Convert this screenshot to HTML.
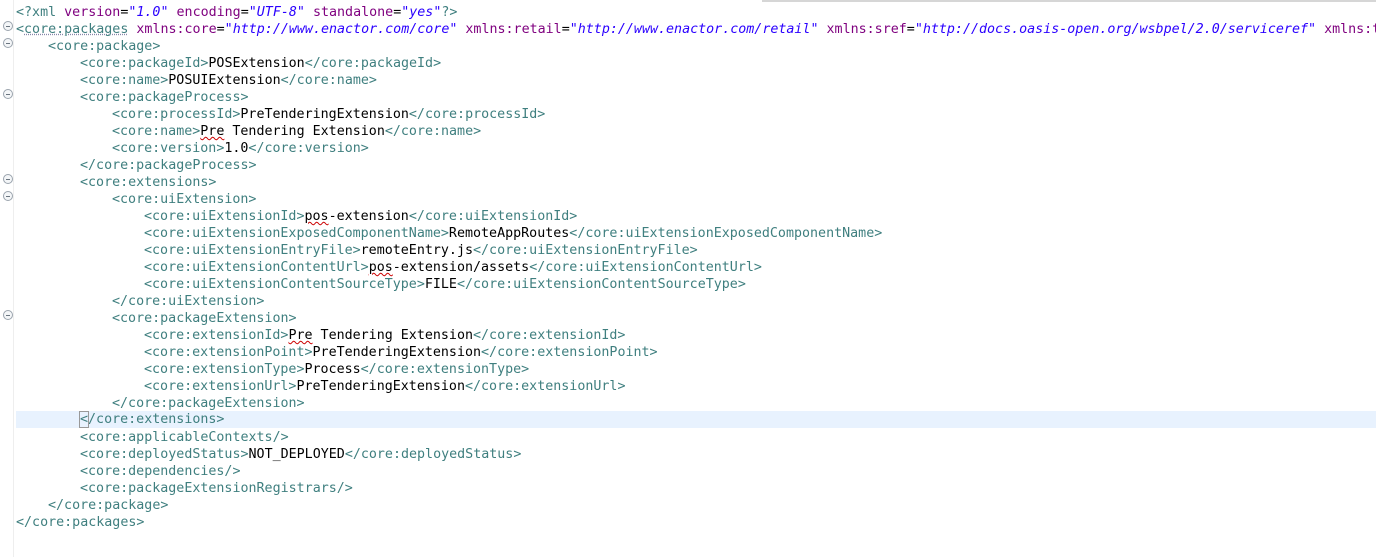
<!DOCTYPE html>
<html><head><meta charset="utf-8"><style>
body{margin:0;width:1376px;height:557px;background:#fff;overflow:hidden;position:relative;font-family:"DejaVu Sans Mono","Liberation Mono",monospace;font-size:13.33px}
.topbar{position:absolute;left:762px;top:0;right:0;height:2px;background:#d6d6d6}
.gut{position:absolute;left:13px;top:0;width:1px;height:557px;background:#eeeeee}
.hl{position:absolute;left:16px;right:0;top:411px;height:17px;background:#e8f2fe}
.l{position:absolute;left:16px;height:17px;line-height:17px;white-space:pre;color:#000;margin-top:1px}
.t{color:#3f7f7f}.a{color:#7f007f}.v{color:#2a00ff;font-style:italic}
.f{position:absolute;left:3px;width:8px;height:8px;border:1px solid #9aa3ad;border-radius:50%;background:#f4f6f8;margin-top:1px}
.f:after{content:"";position:absolute;left:2px;top:4px;width:4px;height:1px;background:#6a7580}
.sq{text-decoration:underline wavy #c00;text-decoration-thickness:1px}
.cur{outline:1px solid #999}
</style></head><body>
<div class="topbar"></div><div class="gut"></div><div class="hl"></div>
<div class="f" style="top:20px"></div>
<div class="f" style="top:37px"></div>
<div class="f" style="top:88px"></div>
<div class="f" style="top:173px"></div>
<div class="f" style="top:190px"></div>
<div class="f" style="top:309px"></div>
<div class="l" style="top:3px"><span class="t">&lt;?xml </span><span class="a">version</span>=<span class="v">"1.0"</span> <span class="a">encoding</span>=<span class="v">"UTF-8"</span> <span class="a">standalone</span>=<span class="v">"yes"</span><span class="t">?&gt;</span></div>
<div class="l" style="top:20px"><span class="t">&lt;<span style="text-decoration:underline dotted #88a">core:packages</span> </span><span class="a">xmlns:core</span>=<span class="v">"http://www.enactor.com/core"</span> <span class="a">xmlns:retail</span>=<span class="v">"http://www.enactor.com/retail"</span> <span class="a">xmlns:sref</span>=<span class="v">"http://docs.oasis-open.org/wsbpel/2.0/serviceref"</span> <span class="a">xmlns:t</span></div>
<div class="l t" style="top:37px;left:48px">&lt;core:package&gt;</div>
<div class="l" style="top:54px;left:80px"><span class="t">&lt;core:packageId&gt;</span>POSExtension<span class="t">&lt;/core:packageId&gt;</span></div>
<div class="l" style="top:71px;left:80px"><span class="t">&lt;core:name&gt;</span>POSUIExtension<span class="t">&lt;/core:name&gt;</span></div>
<div class="l t" style="top:88px;left:80px">&lt;core:packageProcess&gt;</div>
<div class="l" style="top:105px;left:112px"><span class="t">&lt;core:processId&gt;</span>PreTenderingExtension<span class="t">&lt;/core:processId&gt;</span></div>
<div class="l" style="top:122px;left:112px"><span class="t">&lt;core:name&gt;</span><span class="sq">Pre</span> Tendering Extension<span class="t">&lt;/core:name&gt;</span></div>
<div class="l" style="top:139px;left:112px"><span class="t">&lt;core:version&gt;</span>1.0<span class="t">&lt;/core:version&gt;</span></div>
<div class="l t" style="top:156px;left:80px">&lt;/core:packageProcess&gt;</div>
<div class="l t" style="top:173px;left:80px">&lt;core:extensions&gt;</div>
<div class="l t" style="top:190px;left:112px">&lt;core:uiExtension&gt;</div>
<div class="l" style="top:207px;left:144px"><span class="t">&lt;core:uiExtensionId&gt;</span><span class="sq">pos</span>-extension<span class="t">&lt;/core:uiExtensionId&gt;</span></div>
<div class="l" style="top:224px;left:144px"><span class="t">&lt;core:uiExtensionExposedComponentName&gt;</span>RemoteAppRoutes<span class="t">&lt;/core:uiExtensionExposedComponentName&gt;</span></div>
<div class="l" style="top:241px;left:144px"><span class="t">&lt;core:uiExtensionEntryFile&gt;</span>remoteEntry.js<span class="t">&lt;/core:uiExtensionEntryFile&gt;</span></div>
<div class="l" style="top:258px;left:144px"><span class="t">&lt;core:uiExtensionContentUrl&gt;</span><span class="sq">pos</span>-extension/assets<span class="t">&lt;/core:uiExtensionContentUrl&gt;</span></div>
<div class="l" style="top:275px;left:144px"><span class="t">&lt;core:uiExtensionContentSourceType&gt;</span>FILE<span class="t">&lt;/core:uiExtensionContentSourceType&gt;</span></div>
<div class="l t" style="top:292px;left:112px">&lt;/core:uiExtension&gt;</div>
<div class="l t" style="top:309px;left:112px">&lt;core:packageExtension&gt;</div>
<div class="l" style="top:326px;left:144px"><span class="t">&lt;core:extensionId&gt;</span><span class="sq">Pre</span> Tendering Extension<span class="t">&lt;/core:extensionId&gt;</span></div>
<div class="l" style="top:343px;left:144px"><span class="t">&lt;core:extensionPoint&gt;</span>PreTenderingExtension<span class="t">&lt;/core:extensionPoint&gt;</span></div>
<div class="l" style="top:360px;left:144px"><span class="t">&lt;core:extensionType&gt;</span>Process<span class="t">&lt;/core:extensionType&gt;</span></div>
<div class="l" style="top:377px;left:144px"><span class="t">&lt;core:extensionUrl&gt;</span>PreTenderingExtension<span class="t">&lt;/core:extensionUrl&gt;</span></div>
<div class="l t" style="top:394px;left:112px">&lt;/core:packageExtension&gt;</div>
<div class="l t" style="top:410px;left:80px"><span class="cur">&lt;</span>/core:extensions&gt;</div>
<div class="l t" style="top:428px;left:80px">&lt;core:applicableContexts/&gt;</div>
<div class="l" style="top:445px;left:80px"><span class="t">&lt;core:deployedStatus&gt;</span>NOT_DEPLOYED<span class="t">&lt;/core:deployedStatus&gt;</span></div>
<div class="l t" style="top:462px;left:80px">&lt;core:dependencies/&gt;</div>
<div class="l t" style="top:479px;left:80px">&lt;core:packageExtensionRegistrars/&gt;</div>
<div class="l t" style="top:496px;left:48px">&lt;/core:package&gt;</div>
<div class="l t" style="top:513px">&lt;/core:packages&gt;</div>
</body></html>
